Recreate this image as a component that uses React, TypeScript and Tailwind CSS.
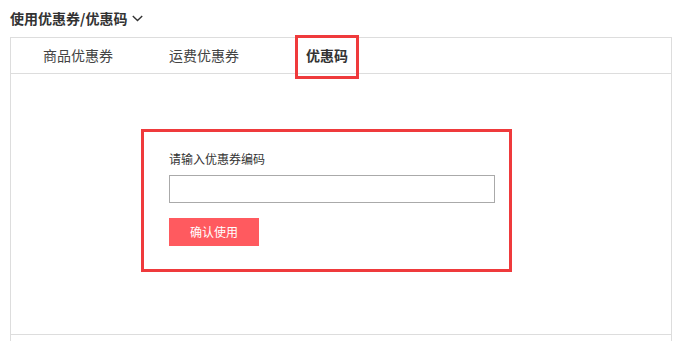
import { useState } from 'react';

const tabs = ['商品优惠券', '运费优惠券', '优惠码'];

export default function App() {
  const [active, setActive] = useState(2);
  const [code, setCode] = useState('');

  return (
    <div
      className="w-[680px] h-[341px] overflow-hidden bg-white text-[#333]"
      style={{ fontFamily: '"Noto Sans CJK SC", "Noto Sans", sans-serif' }}
    >
      {/* 标题 */}
      <div className="flex items-center h-[37px] pl-[10px] pb-[1px]">
        <span className="text-[14px] font-bold leading-[20px] text-[#333]">使用优惠券/优惠码</span>
        <svg className="ml-[5px] mt-[1px]" width="11" height="7" viewBox="0 0 11 7" fill="none">
          <path d="M0.8 1 L5.5 5.6 L10.2 1" stroke="#333" strokeWidth="1.4" />
        </svg>
      </div>

      <div className="ml-[10px] w-[662px] border border-b-0 border-[#ddd] h-[310px]">
        {/* 标签栏 */}
        <div className="flex items-start h-[36px] border-b border-[#ddd] pl-[32px] gap-[56px]">
          {tabs.map((t, i) =>
            i === active ? (
              <div
                key={t}
                className="-mt-[3px] h-[44px] px-[8px] pb-[3px] flex items-center border-[3px] border-[#ef3a3c] text-[14px] font-bold text-[#333] cursor-pointer"
                onClick={() => setActive(i)}
              >
                {t}
              </div>
            ) : (
              <div
                key={t}
                className="h-[35px] flex items-center text-[14px] text-[#444] cursor-pointer"
                onClick={() => setActive(i)}
              >
                {t}
              </div>
            )
          )}
        </div>

        {/* 内容 */}
        <div className="h-[261px] border-b border-[#ddd] pt-[55px] pl-[130px]">
          <div className="w-[371px] h-[143px] border-[3px] border-[#ef3a3c] pl-[25px] pt-[18px]">
            <div className="text-[12px] leading-[17px] text-[#333]">请输入优惠券编码</div>
            <input
              value={code}
              onChange={(e) => setCode(e.target.value)}
              className="mt-[8px] block w-[326px] h-[28px] border border-[#aaa] outline-none px-2 text-[12px]"
            />
            <button className="mt-[15px] block w-[90px] h-[28px] bg-[#ff5a5f] text-white text-[12px] leading-[28px]">
              确认使用
            </button>
          </div>
        </div>
      </div>
    </div>
  );
}
